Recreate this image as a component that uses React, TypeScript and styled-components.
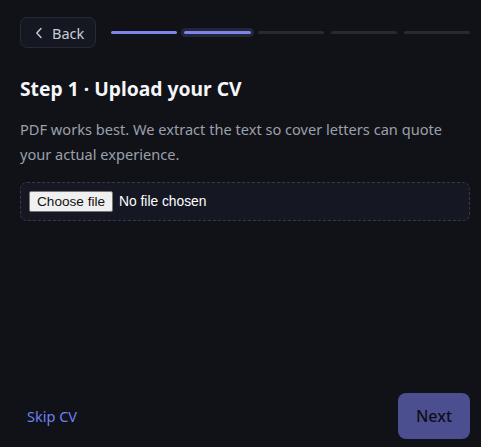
import React from 'react';
import styled, { createGlobalStyle } from 'styled-components';

const GlobalStyle = createGlobalStyle`
  html, body {
    margin: 0;
    padding: 0;
    background: #111217;
  }
  * {
    box-sizing: border-box;
  }
`;

const Page = styled.div`
  min-height: 447px;
  display: flex;
  flex-direction: column;
  padding: 17px 11px 8px 20px;
  font-family: 'Noto Sans', 'Open Sans', sans-serif;
  color: #f3f4f7;
`;

const Header = styled.div`
  display: flex;
  align-items: center;
`;

const BackButton = styled.button`
  display: flex;
  align-items: center;
  gap: 9px;
  height: 31px;
  padding: 0 11px 0 14px;
  border: 1px solid #262a35;
  border-radius: 7px;
  background: #151821;
  color: #c9cdd8;
  font-family: inherit;
  font-size: 14.5px;
  cursor: pointer;
`;

const Progress = styled.div`
  flex: 1;
  display: flex;
  gap: 7px;
  margin-left: 15px;
`;

const Segment = styled.div<{ $done: boolean; $current: boolean }>`
  flex: 1;
  height: 3px;
  border-radius: 2px;
  background: ${(p) => (p.$done ? '#7d83ea' : '#262a35')};
  box-shadow: ${(p) => (p.$current ? '0 0 0 3px #222638' : 'none')};
`;

const Title = styled.h1`
  margin: 27px 0 0;
  font-size: 19.3px;
  font-weight: 700;
  line-height: 28px;
  color: #f5f6fa;
`;

const Lead = styled.p`
  margin: 14px 0 0;
  font-size: 14.6px;
  line-height: 25px;
  color: #9aa0ad;
`;

const DropZone = styled.label`
  display: flex;
  align-items: center;
  gap: 6px;
  margin-top: 15px;
  height: 39px;
  padding: 0 8px;
  border: 1px dashed #343949;
  border-radius: 7px;
  background: #151822;
  cursor: pointer;

  input {
    display: none;
  }
`;

const ChooseButton = styled.span`
  display: inline-flex;
  align-items: center;
  height: 21px;
  padding: 0 7px;
  background: #f0f0f0;
  border: 1px solid #767676;
  border-radius: 2px;
  color: #111;
  font-family: 'Liberation Sans', Arial, sans-serif;
  font-size: 13.6px;
`;

const FileName = styled.span`
  font-family: 'Liberation Sans', Arial, sans-serif;
  font-size: 13.8px;
  color: #ffffff;
`;

const Footer = styled.div`
  margin-top: auto;
  display: flex;
  align-items: center;
  justify-content: space-between;
`;

const SkipLink = styled.button`
  background: none;
  border: none;
  padding: 0 0 0 7px;
  color: #6d7ff2;
  font-family: inherit;
  font-size: 14.5px;
  cursor: pointer;
`;

const NextButton = styled.button`
  display: flex;
  align-items: center;
  justify-content: center;
  width: 72px;
  height: 46px;
  border: none;
  border-radius: 8px;
  background: #4c4f8f;
  cursor: pointer;
`;

const NextLabel = styled.span`
  font-family: 'Noto Sans', 'Open Sans', sans-serif;
  font-size: 16px;
  font-weight: 500;
  color: #0d0e18;
`;

const steps = [0, 1, 2, 3, 4];
const current = 1;

export default function App() {
  return (
    <>
      <GlobalStyle />
      <Page>
        <Header>
          <BackButton>
            <svg width="8" height="12" viewBox="0 0 8 12" fill="none">
              <path d="M6 1.5 1.8 6 6 10.5" stroke="#c9cdd8" strokeWidth="1.4" strokeLinecap="round" strokeLinejoin="round" />
            </svg>
            Back
          </BackButton>
          <Progress>
            {steps.map((s) => (
              <Segment key={s} $done={s <= current} $current={s === current} />
            ))}
          </Progress>
        </Header>

        <Title>Step 1 · Upload your CV</Title>
        <Lead>
          PDF works best. We extract the text so cover letters can quote your actual experience.
        </Lead>

        <DropZone>
          <input type="file" accept=".pdf,.doc,.docx,.txt" />
          <ChooseButton>Choose file</ChooseButton>
          <FileName>No file chosen</FileName>
        </DropZone>

        <Footer>
          <SkipLink>Skip CV</SkipLink>
          <NextButton>
            <NextLabel>Next</NextLabel>
          </NextButton>
        </Footer>
      </Page>
    </>
  );
}
